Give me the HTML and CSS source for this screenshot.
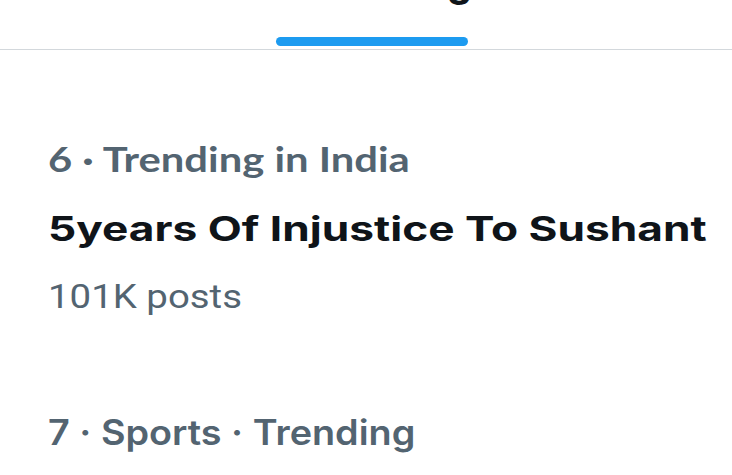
FILE: index.html
```html
<!DOCTYPE html>
<html>
<head>
<meta charset="utf-8">
<link rel="stylesheet" href="styles.css">
</head>
<body>
<header class="tabs">
  <div class="tab">
    <span class="tab-label">Trending</span>
    <span class="tab-indicator"></span>
  </div>
</header>
<main class="list">
  <article class="trend">
    <div class="meta meta-lato">6 · Trending in India</div>
    <div class="title">5years Of Injustice To Sushant</div>
    <div class="count">101K posts</div>
  </article>
  <article class="trend">
    <div class="meta meta-plex">7 · Sports · Trending</div>
  </article>
</main>
</body>
</html>
```
FILE: styles.css
```css
html, body {
  margin: 0;
  padding: 0;
  background: #ffffff;
  width: 732px;
  height: 475px;
  overflow: hidden;
}
.tabs {
  height: 49px;
  border-bottom: 1px solid #d3d8dc;
  display: flex;
  justify-content: center;
  padding-left: 12px;
  box-sizing: content-box;
}
.tab {
  width: 192px;
  display: flex;
  flex-direction: column;
  align-items: center;
  justify-content: space-between;
  padding-bottom: 3px;
  box-sizing: border-box;
}
.tab-label {
  font-family: "Inter", sans-serif;
  font-weight: 700;
  font-size: 40px;
  line-height: 40px;
  color: #0f1419;
  margin-top: -38px;
  margin-left: 26px;
  white-space: nowrap;
}
.tab-indicator {
  width: 192px;
  height: 9px;
  border-radius: 5px;
  background: #1d9bf0;
}
.list {
  padding: 0 0 0 48px;
}
.trend {
  display: flex;
  flex-direction: column;
  align-items: flex-start;
}
.trend + .trend {
  margin-top: 96px;
}
.meta,
.title,
.count {
  line-height: 40px;
  white-space: nowrap;
  transform-origin: left center;
}
.meta {
  color: #536471;
  font-weight: 700;
}
.meta-lato {
  font-family: "Lato", sans-serif;
  font-size: 34px;
  transform: scaleX(1.228);
  margin-top: 89px;
}
.meta-plex {
  font-family: "Inter", sans-serif;
  font-weight: 600;
  font-size: 35px;
  transform: scaleX(1.08);
}
.title {
  font-family: "Inter", sans-serif;
  font-weight: 700;
  font-size: 34px;
  color: #0f1419;
  transform: scaleX(1.3);
  margin-top: 30px;
}
.count {
  font-family: "Roboto", sans-serif;
  font-weight: 400;
  font-size: 34px;
  color: #536471;
  transform: scaleX(1.129);
  margin-top: 27px;
}
```
